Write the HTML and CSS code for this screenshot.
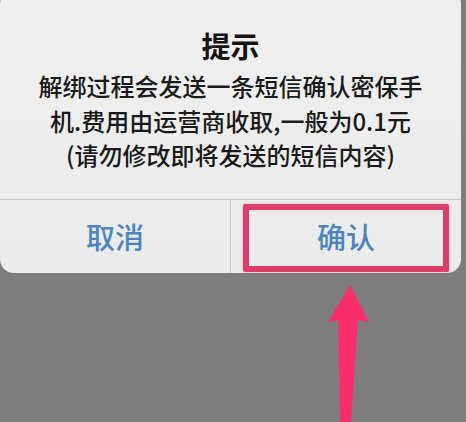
FILE: index.html
```html
<!DOCTYPE html>
<html lang="zh">
<head>
<meta charset="utf-8">
<link rel="stylesheet" href="styles.css">
</head>
<body>
<div class="screen">
  <div class="dialog">
    <div class="content">
      <div class="title">提示</div>
      <div class="message">解绑过程会发送一条短信确认密保手<br>机.费用由运营商收取,一般为0.1元<br>(请勿修改即将发送的短信内容)</div>
    </div>
    <div class="actions">
      <div class="btn">取消</div>
      <div class="btn btn-confirm">确认<span class="highlight"></span></div>
    </div>
  </div>
  <svg class="arrow" width="466" height="422" viewBox="0 0 466 422">
    <path d="M350 285 L369 322 L358 320 L351 422 L340 422 L338 320 L328 322 Z" fill="#fb2e6b"/>
  </svg>
</div>
</body>
</html>
```
FILE: styles.css
```css
html, body {
  margin: 0;
  padding: 0;
}
body {
  background: #7e7e7e;
  width: 466px;
  height: 422px;
  overflow: hidden;
  font-family: "Noto Sans CJK SC", "Noto Sans", sans-serif;
}
.screen {
  position: relative;
  display: flow-root;
  width: 466px;
  height: 422px;
}
.dialog {
  width: 461px;
  margin-top: -10px;
  background: linear-gradient(#efefef, #ebebeb);
  border-radius: 14px;
  overflow: hidden;
}
.content {
  padding: 37px 0 26px;
  text-align: center;
  border-bottom: 1px solid #c6c6c6;
}
.title {
  font-size: 29px;
  font-weight: 700;
  line-height: 36px;
  color: #151515;
}
.message {
  margin-top: 6px;
  font-size: 24px;
  font-weight: 500;
  line-height: 34.5px;
  color: #1a1a1a;
}
.actions {
  display: flex;
  height: 73px;
}
.btn {
  position: relative;
  flex: 1 1 0;
  display: flex;
  align-items: center;
  justify-content: center;
  font-size: 29px;
  font-weight: 500;
  color: #4a85bf;
}
.btn-confirm {
  border-left: 1px solid #c8c8c8;
}
.highlight {
  position: absolute;
  left: 12px;
  right: 12px;
  top: 4px;
  bottom: 1px;
  border: 6px solid #de3d6b;
  border-radius: 2px;
  box-shadow: 0 0 2px rgba(222, 61, 107, 0.6);
}
.arrow {
  position: absolute;
  left: 0;
  top: 0;
}
```
